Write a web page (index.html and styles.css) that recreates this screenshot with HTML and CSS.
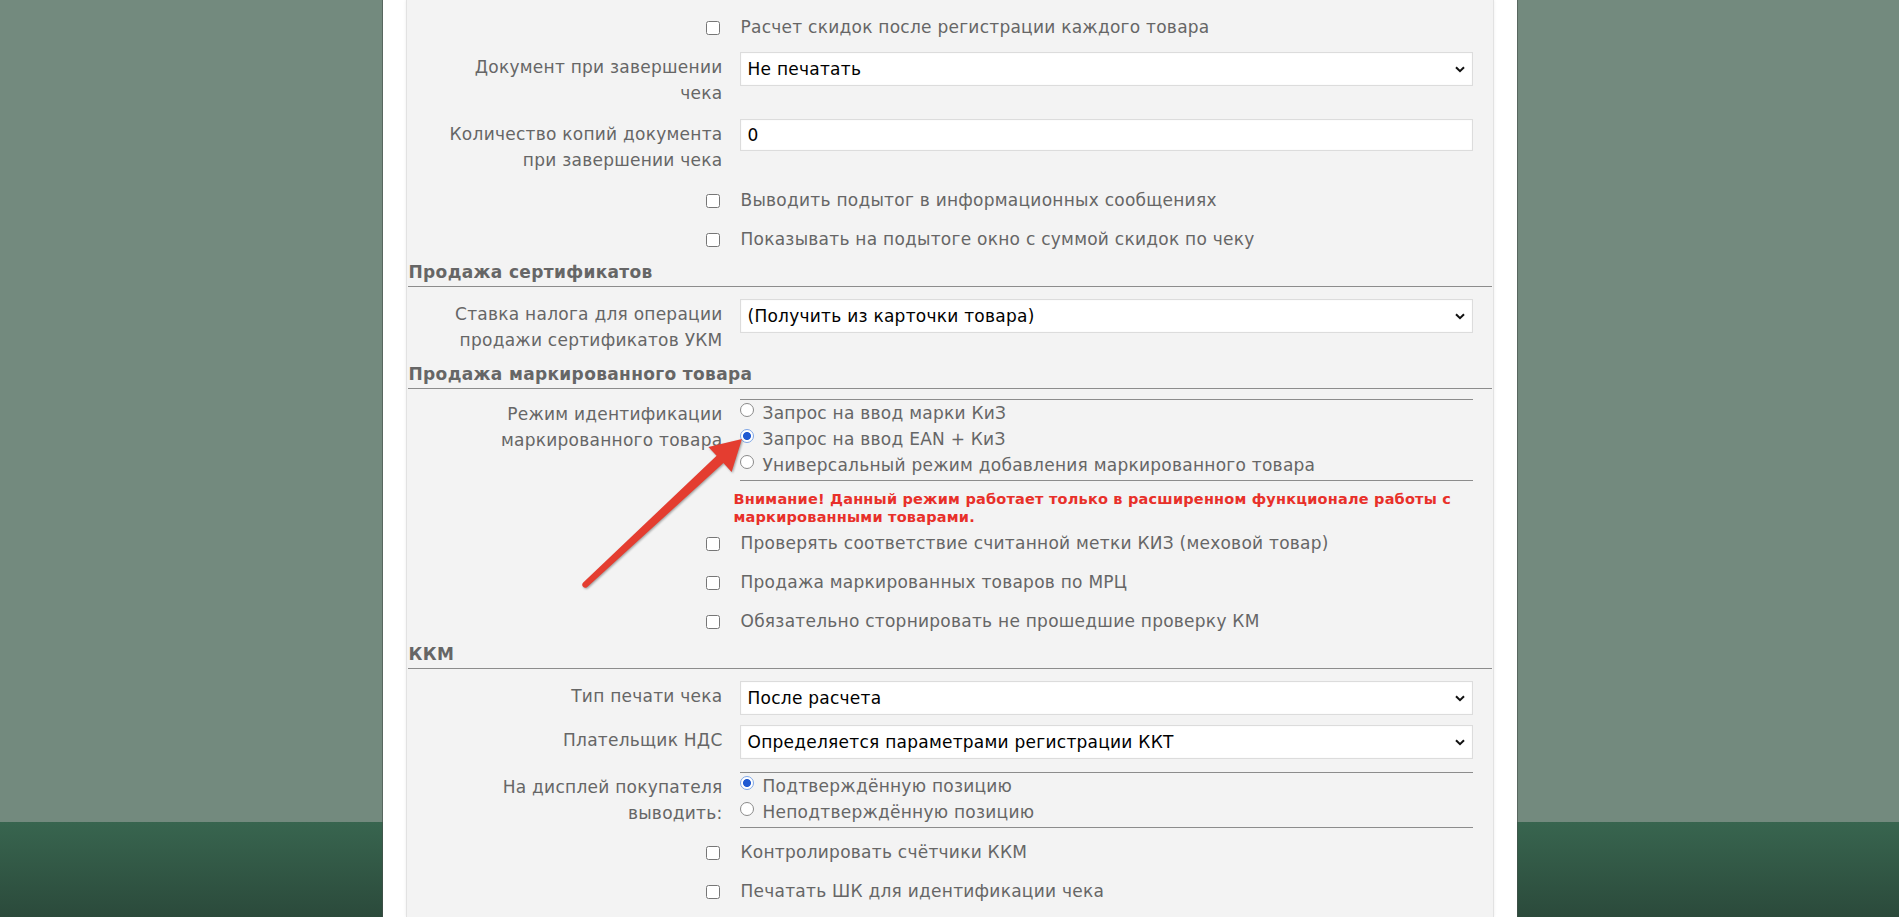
FILE: index.html
```html
<!DOCTYPE html>
<html lang="ru">
<head>
<meta charset="utf-8">
<title>Настройки</title>
<link rel="stylesheet" href="styles.css">
</head>
<body>
<div class="page">
  <div class="panel">
    <div class="content">
      <div class="row row-cb">
        <div class="lbl"><input type="checkbox" class="cb"></div>
        <div class="ctl">Расчет скидок после регистрации каждого товара</div>
      </div>
      <div class="row row-field">
        <div class="lbl">Документ при завершении<br>чека</div>
        <div class="ctl"><div class="sel">Не печатать</div></div>
      </div>
      <div class="row row-field">
        <div class="lbl">Количество копий документа<br>при завершении чека</div>
        <div class="ctl"><div class="inp">0</div></div>
      </div>
      <div class="row row-cb">
        <div class="lbl"><input type="checkbox" class="cb"></div>
        <div class="ctl">Выводить подытог в информационных сообщениях</div>
      </div>
      <div class="row row-cb">
        <div class="lbl"><input type="checkbox" class="cb"></div>
        <div class="ctl">Показывать на подытоге окно с суммой скидок по чеку</div>
      </div>

      <div class="section">Продажа сертификатов</div>
      <div class="row row-field">
        <div class="lbl">Ставка налога для операции<br>продажи сертификатов УКМ</div>
        <div class="ctl"><div class="sel">(Получить из карточки товара)</div></div>
      </div>

      <div class="section">Продажа маркированного товара</div>
      <div class="row row-radio">
        <div class="lbl">Режим идентификации<br>маркированного товара</div>
        <div class="ctl">
          <div class="radios">
            <div class="ropt"><input type="radio" name="mode" class="rd">Запрос на ввод марки КиЗ</div>
            <div class="ropt"><input type="radio" name="mode" class="rd" checked>Запрос на ввод EAN + КиЗ</div>
            <div class="ropt"><input type="radio" name="mode" class="rd">Универсальный режим добавления маркированного товара</div>
          </div>
        </div>
      </div>
      <div class="row row-warn">
        <div class="lbl"></div>
        <div class="warn">Внимание! Данный режим работает только в расширенном функционале работы с<br>маркированными товарами.</div>
      </div>
      <div class="row row-cb">
        <div class="lbl"><input type="checkbox" class="cb"></div>
        <div class="ctl">Проверять соответствие считанной метки КИЗ (меховой товар)</div>
      </div>
      <div class="row row-cb">
        <div class="lbl"><input type="checkbox" class="cb"></div>
        <div class="ctl">Продажа маркированных товаров по МРЦ</div>
      </div>
      <div class="row row-cb">
        <div class="lbl"><input type="checkbox" class="cb"></div>
        <div class="ctl">Обязательно сторнировать не прошедшие проверку КМ</div>
      </div>

      <div class="section">ККМ</div>
      <div class="row row-field">
        <div class="lbl">Тип печати чека</div>
        <div class="ctl"><div class="sel">После расчета</div></div>
      </div>
      <div class="row row-field">
        <div class="lbl">Плательщик НДС</div>
        <div class="ctl"><div class="sel">Определяется параметрами регистрации ККТ</div></div>
      </div>
      <div class="row row-radio row-radio-lo">
        <div class="lbl">На дисплей покупателя<br>выводить:</div>
        <div class="ctl">
          <div class="radios">
            <div class="ropt"><input type="radio" name="disp" class="rd" checked>Подтверждённую позицию</div>
            <div class="ropt"><input type="radio" name="disp" class="rd">Неподтверждённую позицию</div>
          </div>
        </div>
      </div>
      <div class="row row-cb">
        <div class="lbl"><input type="checkbox" class="cb"></div>
        <div class="ctl">Контролировать счётчики ККМ</div>
      </div>
      <div class="row row-cb">
        <div class="lbl"><input type="checkbox" class="cb"></div>
        <div class="ctl">Печатать ШК для идентификации чека</div>
      </div>
    </div>
  </div>
  <svg class="arrow" width="1899" height="917" viewBox="0 0 1899 917">
    <path d="M742 439 L731.6 471.9 L723.4 463.1 L587.0 587.2 A3 3 0 0 1 583.0 582.8 L716.6 455.7 L708.4 447.0 Z" fill="#e43d30"/>
  </svg>
</div>
</body>
</html>
```

FILE: styles.css
```css
html, body {
  margin: 0;
  padding: 0;
  height: 917px;
  overflow: hidden;
}

body {
  background: linear-gradient(to bottom, #738a7e 0, #738a7e 822px, #38654f 822px, #2b4a3b 917px);
  font-family: "DejaVu Sans", Verdana, sans-serif;
  font-size: 17px;
  letter-spacing: 0.25px;
  color: #666;
}

.page {
  position: relative;
  height: 917px;
}

.panel {
  width: 1088px;
  height: 917px;
  margin: 0 auto;
  padding: 0 23px;
  background: #fff;
  box-shadow: 0 0 0 1px rgba(70, 80, 75, 0.6);
}

.content {
  height: 917px;
  box-sizing: border-box;
  background: #f3f3f3;
  border-left: 1px solid #e2e2e2;
  border-right: 1px solid #e2e2e2;
  box-shadow: 0 0 3px rgba(0, 0, 0, 0.08);
  padding: 8px 0 0 0;
}

.row {
  display: grid;
  grid-template-columns: 316px 733px;
  column-gap: 17px;
}

.lbl {
  text-align: right;
  line-height: 26px;
  color: #666;
  white-space: nowrap;
}

.row-cb {
  padding: 5px 0;
  height: 29px;
  align-items: center;
}

.row-cb .lbl {
  display: flex;
  justify-content: flex-end;
  align-items: center;
}

.row-cb .ctl {
  padding-left: 1px;
  line-height: 29px;
  white-space: nowrap;
}

.cb {
  width: 14px;
  height: 14px;
  margin: 0 3px 0 0;
}

.row-field {
  padding: 5px 0;
  align-items: start;
}

.row-field .lbl {
  padding: 2px 0 3px;
}

.sel, .inp {
  box-sizing: border-box;
  height: 34px;
  background: #fff;
  border: 1px solid #dcdcdc;
  box-shadow: inset 0 0 2px rgba(0, 0, 0, 0.06);
  color: #000;
  line-height: 32px;
  padding-left: 7px;
  white-space: nowrap;
}

.sel {
  background: #fff url("data:image/svg+xml,%3Csvg xmlns='http://www.w3.org/2000/svg' width='10' height='7'%3E%3Cpath d='M1 1.2l4 4 4-4' fill='none' stroke='%23111' stroke-width='2'/%3E%3C/svg%3E") no-repeat right 7px center;
}

.inp {
  height: 32px;
  line-height: 30px;
}

.section {
  margin: 0 1px 7px;
  padding: 2px 1px 3px;
  line-height: 22px;
  font-weight: bold;
  font-size: 17px;
  letter-spacing: 0.35px;
  color: #666;
  border-bottom: 1px solid #8c8c8c;
}

.row-radio {
  padding: 3px 0 5px;
  align-items: start;
}

.row-radio-lo {
  padding-top: 8px;
}

.row-radio .lbl {
  padding-top: 2px;
}

.radios {
  border-top: 1px solid #8c8c8c;
  border-bottom: 1px solid #8c8c8c;
  padding-bottom: 2px;
}

.ropt {
  display: flex;
  align-items: center;
  height: 26px;
  white-space: nowrap;
}

.rd {
  appearance: none;
  -webkit-appearance: none;
  box-sizing: border-box;
  width: 14px;
  height: 14px;
  margin: 0 9px 0 0;
  border: 1px solid #8a8a8a;
  border-radius: 50%;
  background: #fff;
  position: relative;
  top: -3px;
  flex: none;
}

.rd:checked {
  border-color: #7fa6e6;
  background: radial-gradient(circle, #1f59d2 0, #1f59d2 3.6px, #fff 4.4px);
}

.row-warn {
  margin-top: -1px;
  height: 39px;
}

.warn {
  margin-left: -6px;
  padding-top: 5px;
  color: #e8302a;
  font-weight: bold;
  font-size: 14.5px;
  letter-spacing: 0.2px;
  line-height: 18px;
  white-space: nowrap;
}

.arrow {
  position: absolute;
  left: 0;
  top: 0;
  pointer-events: none;
  filter: drop-shadow(1px 1px 1px rgba(0, 0, 0, 0.35));
}
```
